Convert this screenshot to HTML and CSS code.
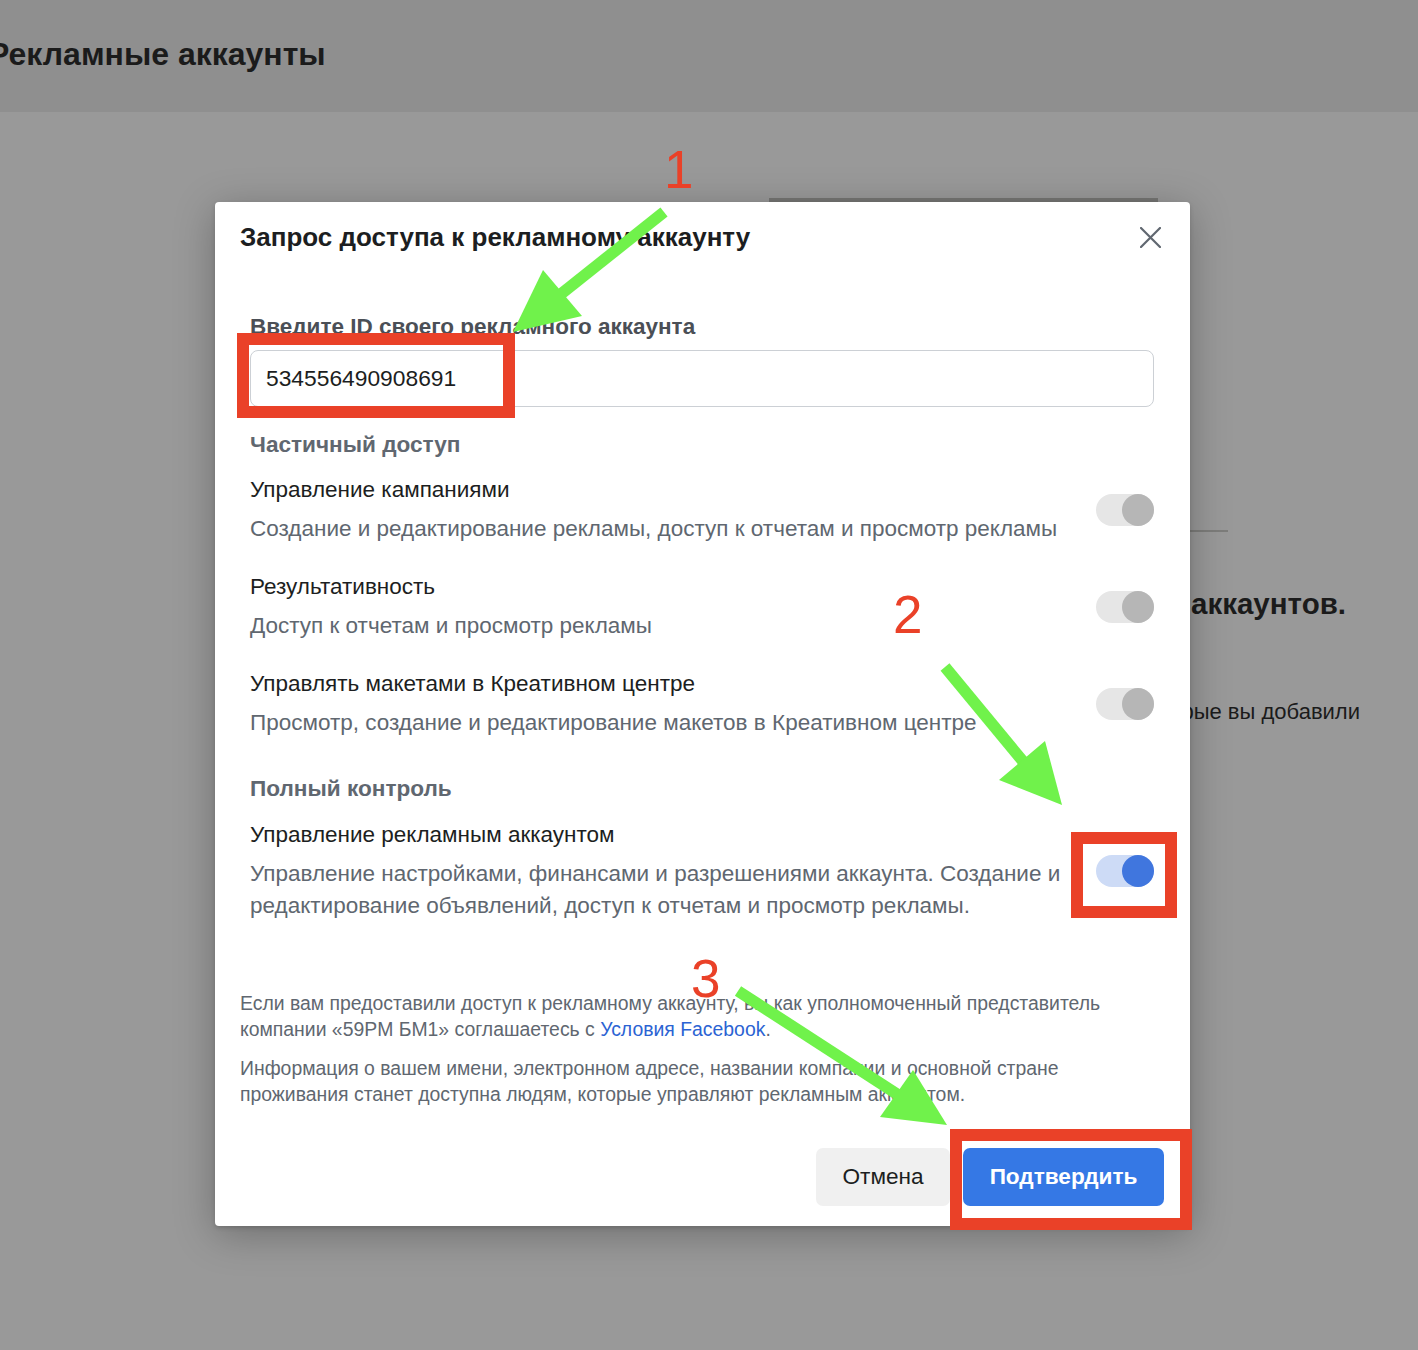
FILE: index.html
```html
<!DOCTYPE html>
<html lang="ru">
<head>
<meta charset="utf-8">
<title>Рекламные аккаунты</title>
<link rel="stylesheet" href="styles.css">
</head>
<body>
<div class="page">
  <header class="topbar">
    <h1 class="page-title">Рекламные аккаунты</h1>
  </header>
  <main class="page-content">
    <div class="tabs-line"></div>
    <div class="divider"></div>
    <div class="empty-title">У вас пока нет рекламных аккаунтов.</div>
    <div class="empty-text">Здесь появятся рекламные аккаунты, которые вы добавили</div>
  </main>

  <div class="modal">
    <div class="modal-header">
      <h2 class="modal-title">Запрос доступа к рекламному аккаунту</h2>
      <span class="close">
        <svg width="21" height="21" viewBox="0 0 21 21"><path d="M1 1L20 20M20 1L1 20" stroke="#606770" stroke-width="2.2" stroke-linecap="round" fill="none"/></svg>
      </span>
    </div>
    <div class="modal-body">
      <div class="field-label">Введите ID своего рекламного аккаунта</div>
      <div class="input">534556490908691</div>

      <div class="section-title">Частичный доступ</div>
      <div class="perm-list">
        <div class="perm">
          <div class="perm-text">
            <div class="perm-title">Управление кампаниями</div>
            <div class="perm-desc">Создание и редактирование рекламы, доступ к отчетам и просмотр рекламы</div>
          </div>
          <span class="toggle"><span class="knob"></span></span>
        </div>
        <div class="perm">
          <div class="perm-text">
            <div class="perm-title">Результативность</div>
            <div class="perm-desc">Доступ к отчетам и просмотр рекламы</div>
          </div>
          <span class="toggle"><span class="knob"></span></span>
        </div>
        <div class="perm">
          <div class="perm-text">
            <div class="perm-title">Управлять макетами в Креативном центре</div>
            <div class="perm-desc">Просмотр, создание и редактирование макетов в Креативном центре</div>
          </div>
          <span class="toggle"><span class="knob"></span></span>
        </div>
      </div>

      <div class="section-title section-title-2">Полный контроль</div>
      <div class="perm">
        <div class="perm-text">
          <div class="perm-title">Управление рекламным аккаунтом</div>
          <div class="perm-desc">Управление настройками, финансами и разрешениями аккаунта. Создание и редактирование объявлений, доступ к отчетам и просмотр рекламы.</div>
        </div>
        <span class="toggle toggle-on"><span class="knob"></span></span>
      </div>
    </div>

    <div class="legal">
      <p>Если вам предоставили доступ к рекламному аккаунту, вы как уполномоченный представитель компании «59PM БМ1» соглашаетесь с <a class="link">Условия Facebook</a>.</p>
      <p>Информация о вашем имени, электронном адресе, названии компании и основной стране проживания станет доступна людям, которые управляют рекламным аккаунтом.</p>
    </div>

    <div class="actions">
      <button class="btn btn-secondary">Отмена</button>
      <button class="btn btn-primary">Подтвердить</button>
    </div>
  </div>

  <svg class="annotations" width="1418" height="1350" viewBox="0 0 1418 1350">
    <g fill="none" stroke="#ea4128" stroke-width="12">
      <rect x="243" y="339" width="266" height="73"/>
      <rect x="1077" y="838" width="94" height="74"/>
      <rect x="956" y="1135" width="230" height="89"/>
    </g>
    <g stroke="#70f24b" stroke-width="11.5" fill="#70f24b">
      <line x1="664" y1="212" x2="556" y2="298"/>
      <polygon stroke="none" points="513,332 543,270 582,316"/>
      <line x1="945" y1="667" x2="1026" y2="765"/>
      <polygon stroke="none" points="1062,805 1045,741 999,780"/>
      <line x1="738" y1="991" x2="900" y2="1096"/>
      <polygon stroke="none" points="947,1125 913,1070 880,1117"/>
    </g>
    <g class="num" fill="#ea4128">
      <text x="664" y="188">1</text>
      <text x="893" y="633">2</text>
      <text x="691" y="997">3</text>
    </g>
  </svg>
</div>
</body>
</html>
```
FILE: styles.css
```css
* { box-sizing: border-box; }

html, body {
  margin: 0;
  padding: 0;
}

body {
  width: 1418px;
  height: 1350px;
  overflow: hidden;
  background: #999999;
  font-family: "Liberation Sans", Arial, Helvetica, sans-serif;
  color: #1c1e21;
}

.page {
  position: relative;
  width: 1418px;
  height: 1350px;
}

/* dimmed page behind the dialog */
.topbar {
  height: 112px;
  background: #8f8f8f;
  display: flex;
  align-items: center;
}

.page-title {
  margin: 0 0 4px -12px;
  font-size: 32px;
  font-weight: 700;
  color: #1b1b1b;
  letter-spacing: 0;
}

.page-content {
  display: flex;
  flex-direction: column;
}

.tabs-line {
  margin: 86px 0 0 769px;
  width: 389px;
  height: 4px;
  background: #767674;
}

.divider {
  margin: 328px 0 0 770px;
  width: 458px;
  height: 2px;
  background: #7d7d7b;
}

.empty-title {
  margin-top: 54px;
  padding-right: 72px;
  text-align: right;
  font-size: 29.5px;
  line-height: 36px;
  font-weight: 700;
  color: #1b1b1b;
}

.empty-text {
  margin-top: 75px;
  padding-right: 58px;
  text-align: right;
  font-size: 22px;
  line-height: 30px;
  color: #1b1b1b;
}

/* dialog */
.modal {
  position: absolute;
  left: 215px;
  top: 202px;
  width: 975px;
  height: 1024px;
  background: #ffffff;
  border-radius: 4px;
  box-shadow: 0 8px 40px rgba(0, 0, 0, 0.28), 0 2px 4px rgba(0, 0, 0, 0.15);
  padding: 20px 0 20px 0;
  display: flex;
  flex-direction: column;
}

.modal-header {
  display: flex;
  align-items: center;
  justify-content: space-between;
  padding: 0 29px 0 25px;
  height: 30px;
}

.modal-title {
  margin: 0;
  font-size: 26px;
  line-height: 30px;
  font-weight: 700;
  color: #1c1e21;
}

.close {
  display: flex;
  width: 21px;
  height: 21px;
}

.modal-body {
  margin-top: 59px;
  padding: 0 36px 0 35px;
}

.field-label {
  font-size: 22.5px;
  line-height: 32px;
  font-weight: 700;
  color: #4b4f56;
  margin-bottom: 7px;
}

.input {
  height: 57px;
  border: 1px solid #ccd0d5;
  border-radius: 8px;
  padding-left: 15px;
  display: flex;
  align-items: center;
  font-size: 22.8px;
  color: #1c1e21;
  margin-bottom: 22px;
}

.section-title {
  font-size: 22.6px;
  line-height: 32px;
  font-weight: 700;
  color: #606770;
  margin-bottom: 13px;
}

.section-title-2 {
  margin-top: 34px;
  margin-bottom: 14px;
}

.perm-list {
  display: flex;
  flex-direction: column;
  gap: 26px;
}

.perm {
  display: flex;
  align-items: center;
  gap: 14px;
}

.perm-text {
  flex: 1;
}

.perm-title {
  font-size: 22.5px;
  line-height: 32px;
  color: #1c1e21;
}

.perm-desc {
  margin-top: 7px;
  font-size: 22.5px;
  line-height: 32px;
  color: #606770;
}

.toggle {
  flex: none;
  width: 58px;
  height: 32px;
  border-radius: 16px;
  background: #e6e6e6;
  display: flex;
  justify-content: flex-end;
}

.knob {
  width: 32px;
  height: 32px;
  border-radius: 50%;
  background: #b6b6b6;
}

.toggle-on {
  background: #cddbf6;
}

.toggle-on .knob {
  background: #4076de;
}

.legal {
  margin-top: 68px;
  padding: 0 60px 0 25px;
  font-size: 19.4px;
  line-height: 26px;
  color: #606770;
}

.legal p {
  margin: 0 0 13px;
}

.legal p:last-child {
  margin-bottom: 0;
}

.link {
  color: #2b63d3;
}

.actions {
  margin-top: auto;
  display: flex;
  justify-content: flex-end;
  gap: 13px;
  padding-right: 26px;
}

.btn {
  height: 58px;
  border: none;
  border-radius: 7px;
  font-family: "Liberation Sans", Arial, Helvetica, sans-serif;
  font-size: 22.6px;
  padding: 0;
}

.btn-secondary {
  width: 134px;
  background: #f0f0f0;
  color: #1c1e21;
}

.btn-primary {
  width: 201px;
  background: #3578e5;
  color: #ffffff;
  font-weight: 700;
}

/* annotation layer drawn over the screenshot */
.annotations {
  position: absolute;
  left: 0;
  top: 0;
  pointer-events: none;
}

.num text {
  font-family: "Liberation Sans", Arial, Helvetica, sans-serif;
  font-size: 53px;
  font-weight: 400;
}
```
